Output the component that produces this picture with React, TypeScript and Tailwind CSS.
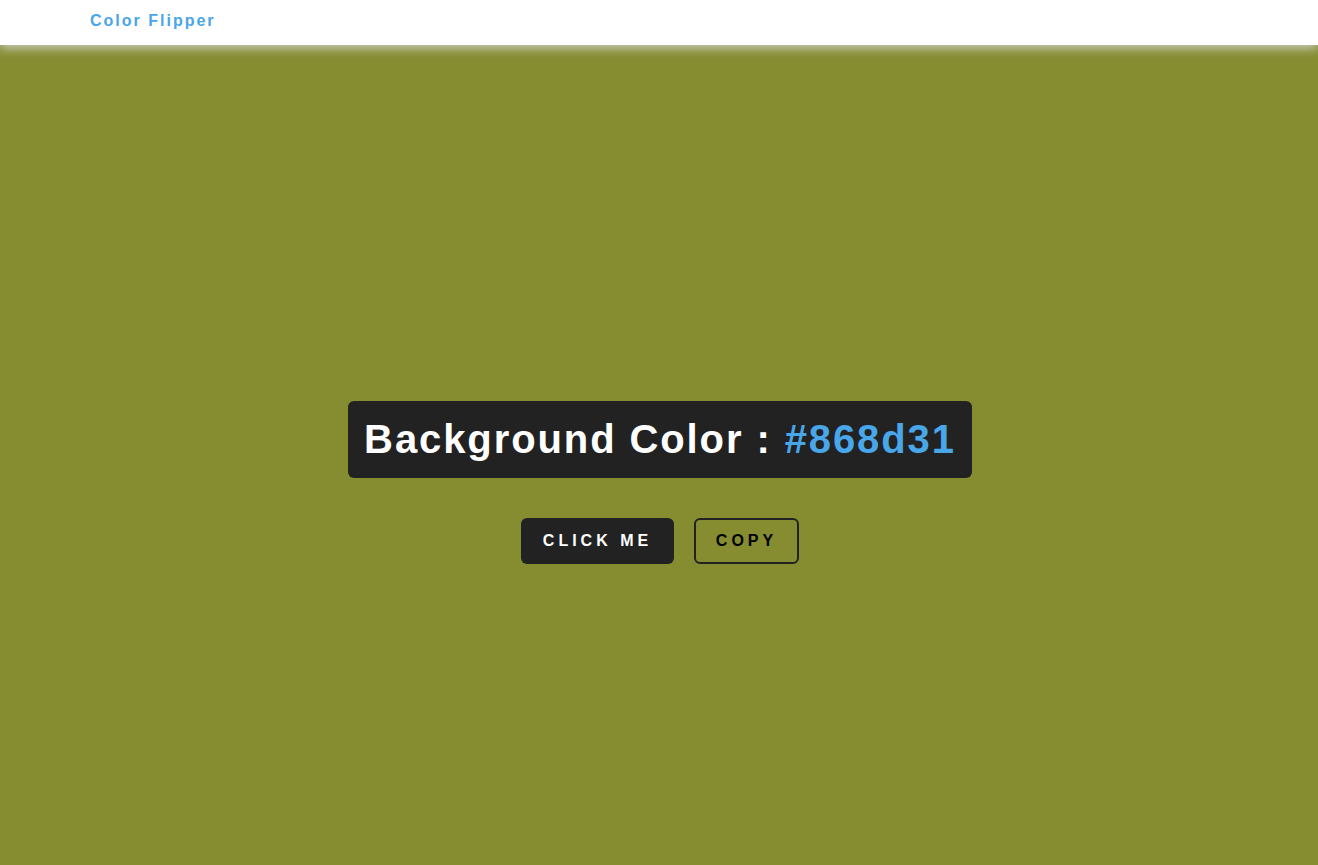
export default function App() {
  const color = '#868d31';

  return (
    <div className="min-h-screen font-['Liberation_Sans',Arial,sans-serif]" style={{ backgroundColor: color }}>
      <nav className="relative z-10 h-[45px] bg-white shadow-[0_3px_10px_rgba(215,215,215,0.9)]">
        <div className="flex h-full items-center pb-[3px] pl-[90px]">
          <h4 className="text-[16px] font-bold tracking-[2px] text-[#49a6e9]">Color Flipper</h4>
        </div>
      </nav>
      <main className="flex flex-col items-center pt-[356px]">
        <h2 className="ml-[2px] rounded-[6px] bg-[#222222] px-4 pb-[15px] pt-[14px] text-[40px] font-bold leading-[48px] tracking-[1.9px] text-white">
          Background Color : <span className="text-[#49a6e9]">{color}</span>
        </h2>
        <div className="ml-[2px] mt-[40px] flex gap-5">
          <button className="h-[46px] w-[153px] rounded-[6px] bg-[#222222] text-[16px] font-bold uppercase tracking-[4px] text-white">
            Click me
          </button>
          <button className="h-[46px] w-[105px] rounded-[6px] border-2 border-[#222222] text-[16px] font-bold uppercase tracking-[4px] text-black">
            Copy
          </button>
        </div>
      </main>
    </div>
  );
}
